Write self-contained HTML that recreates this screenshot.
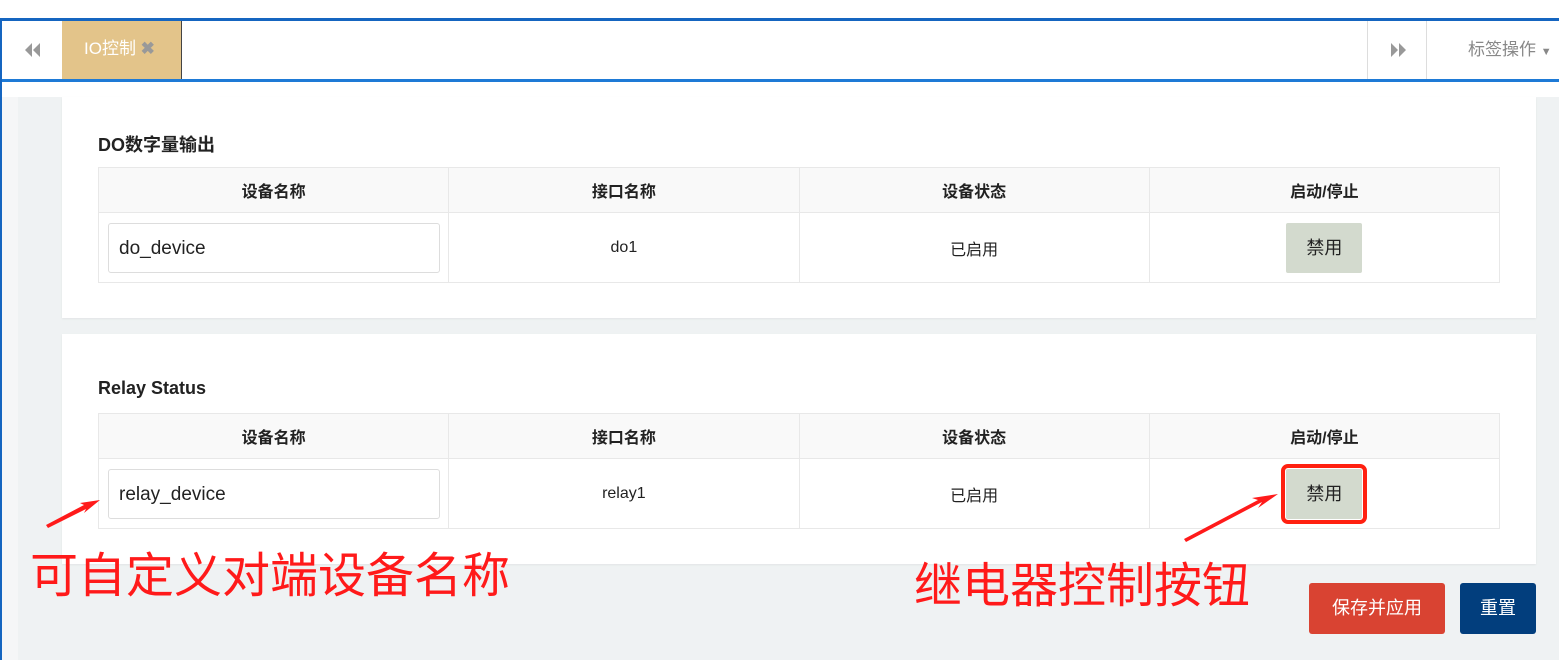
<!DOCTYPE html>
<html><head><meta charset="utf-8"><style>
*{margin:0;padding:0;box-sizing:border-box}
body{width:1559px;height:660px;overflow:hidden;background:#fff;font-family:"Liberation Sans","Noto Sans CJK SC",sans-serif;position:relative}
.abs{position:absolute}
.card{position:absolute;left:62px;width:1474px;background:#fff;box-shadow:0 1px 2px rgba(0,0,0,.06)}
table{position:absolute;left:36px;width:1402px;border-collapse:collapse;font-size:16px;color:#222}
td,th{border:1px solid #e8e8e8;text-align:center;width:350px}
th{height:45px;background:#f9f9f9;font-weight:bold}
td{height:70px;font-size:16px}
.inp{margin-left:9px;width:332px;height:50px;border:1px solid #ddd;border-radius:3px;text-align:left;padding-left:10px;line-height:50px;font-size:19px}
.btn{display:inline-block;width:76px;height:50px;line-height:50px;background:#d3dace;border-radius:2px;font-size:18px}
.title{position:absolute;left:36px;font-size:18px;font-weight:bold;color:#222}
.red{color:#ff1a1a;font-size:48px;font-family:"Noto Sans CJK SC",sans-serif}
</style></head><body>
<div class="abs" style="left:0;top:18px;width:1559px;height:3px;background:#1565c0"></div>
<div class="abs" style="left:0;top:79px;width:1559px;height:3px;background:#1e7ad6"></div>
<div class="abs" style="left:0;top:18px;width:2px;height:642px;background:#1565c0"></div>
<svg class="abs" style="left:24px;top:43px" width="16" height="14"><path d="M8 0V14L1 7Z M16 0V14L9 7Z" fill="#999"/></svg>
<div class="abs" style="left:62px;top:21px;width:120px;height:58px;background:#e3c48a;border-right:1px solid #444;color:#fff;font-size:17px;line-height:56px;padding-left:22px">IO控制 <span style="color:#999;font-weight:bold">✖</span></div>
<div class="abs" style="left:1367px;top:21px;width:60px;height:58px;border-left:1px solid #ddd;border-right:1px solid #ddd"></div>
<svg class="abs" style="left:1391px;top:43px" width="16" height="14"><path d="M0 0V14L7 7Z M8 0V14L15 7Z" fill="#999"/></svg>
<div class="abs" style="left:1468px;top:21px;height:58px;color:#888;font-size:17px;line-height:58px">标签操作 <span style="font-size:11px">▼</span></div>
<div class="abs" style="left:2px;top:97px;width:16px;height:563px;background:#f5f6f7"></div>
<div class="abs" style="left:18px;top:97px;width:1541px;height:563px;background:#eff2f3"></div>
<div class="card" style="top:97px;height:221px">
<div class="title" style="top:34px">DO数字量输出</div>
<table style="top:70px"><tr><th>设备名称</th><th>接口名称</th><th>设备状态</th><th>启动/停止</th></tr>
<tr><td><div class="inp">do_device</div></td><td>do1</td><td>已启用</td><td><span class="btn">禁用</span></td></tr></table>
</div>
<div class="card" style="top:334px;height:230px">
<div class="title" style="top:44px">Relay Status</div>
<table style="top:79px"><tr><th>设备名称</th><th>接口名称</th><th>设备状态</th><th>启动/停止</th></tr>
<tr><td><div class="inp">relay_device</div></td><td>relay1</td><td>已启用</td><td><span class="btn" style="outline:4px solid #ff2010;outline-offset:1px;border-radius:2px">禁用</span></td></tr></table>
</div>
<div class="abs red" style="left:30px;top:536px">可自定义对端设备名称</div>
<div class="abs red" style="left:914px;top:546px">继电器控制按钮</div>
<svg class="abs" style="left:0;top:0" width="1559" height="660">
<path d="M48 528 L86 509 L84 513 L100 500 L80 503 L84 505 L46 525Z" fill="#ff1a1a"/>
<path d="M1186 542 L1262 502 L1258 508 L1278 494 L1252 498 L1258 500 L1184 539Z" fill="#ff1a1a"/>
</svg>
<div class="abs" style="left:1309px;top:583px;width:136px;height:51px;background:#d94332;border-radius:3px;color:#fff;font-size:18px;text-align:center;line-height:51px">保存并应用</div>
<div class="abs" style="left:1460px;top:583px;width:76px;height:51px;background:#023e7d;border-radius:3px;color:#fff;font-size:18px;text-align:center;line-height:51px">重置</div>
</body></html>
